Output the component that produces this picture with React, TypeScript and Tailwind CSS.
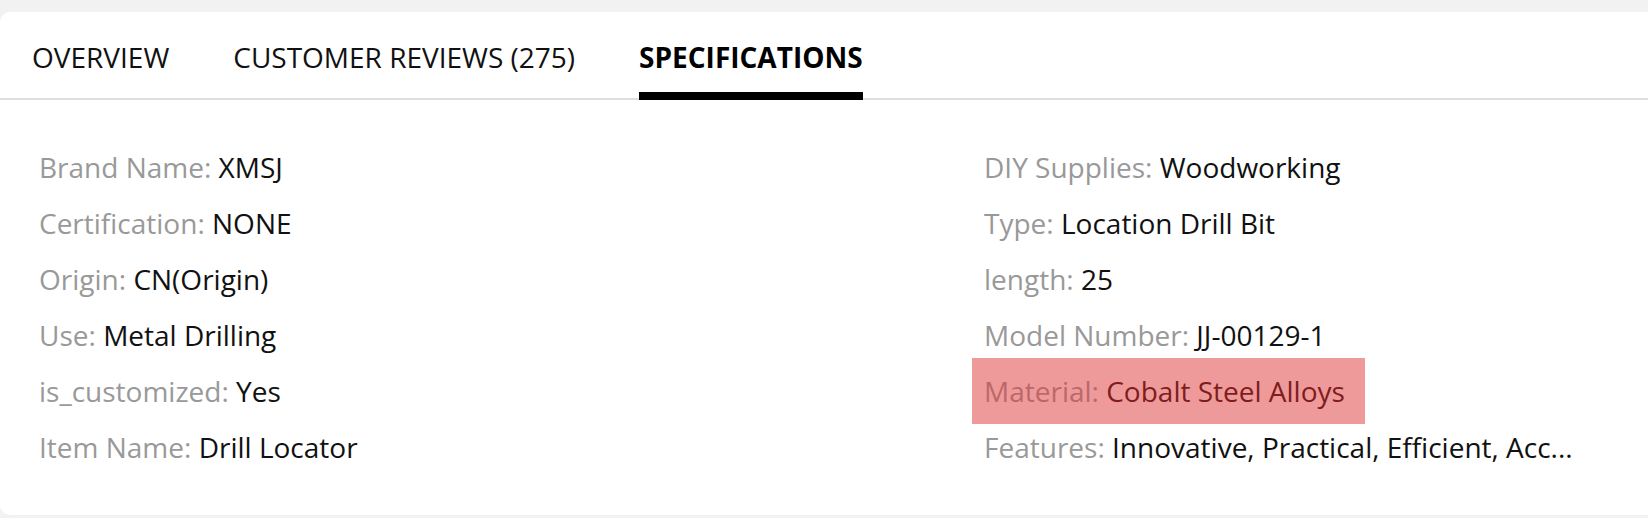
const tabs = [
  { label: "OVERVIEW", active: false },
  { label: "CUSTOMER REVIEWS (275)", active: false },
  { label: "SPECIFICATIONS", active: true },
];

type Spec = { label: string; value: string; highlight?: boolean };

const leftSpecs: Spec[] = [
  { label: "Brand Name", value: "XMSJ" },
  { label: "Certification", value: "NONE" },
  { label: "Origin", value: "CN(Origin)" },
  { label: "Use", value: "Metal Drilling" },
  { label: "is_customized", value: "Yes" },
  { label: "Item Name", value: "Drill Locator" },
];

const rightSpecs: Spec[] = [
  { label: "DIY Supplies", value: "Woodworking" },
  { label: "Type", value: "Location Drill Bit" },
  { label: "length", value: "25" },
  { label: "Model Number", value: "JJ-00129-1" },
  { label: "Material", value: "Cobalt Steel Alloys", highlight: true },
  { label: "Features", value: "Innovative, Practical, Efficient, Acc..." },
];

function SpecRow({ spec }: { spec: Spec }) {
  if (spec.highlight) {
    return (
      <div className="leading-[56px] whitespace-nowrap">
        <span className="-my-[5px] -ml-[12px] inline-block bg-[#ef9a9a] py-[5px] pl-[12px] pr-[20px]">
          <span className="text-[#bb6868]">{spec.label}: </span>
          <span className="text-[#7f1d1d]">{spec.value}</span>
        </span>
      </div>
    );
  }
  return (
    <div className="leading-[56px] whitespace-nowrap">
      <span className="text-[#999999]">{spec.label}: </span>
      <span className="text-[#111111]">{spec.value}</span>
    </div>
  );
}

export default function App() {
  return (
    <div className="h-[518px] overflow-hidden bg-[#f2f2f2] pt-[12px] font-['Open_Sans',sans-serif]">
      <div className="rounded-l-[10px] bg-white pb-[40px]">
        <div className="flex gap-16 border-b-2 border-[#dedede] pl-8">
          {tabs.map((tab) => (
            <div key={tab.label} className="flex flex-col pt-[26px]">
              <span
                className={
                  tab.active
                    ? "text-[28px] font-bold leading-[38px] text-black"
                    : "text-[28px] leading-[38px] text-[#111111]"
                }
              >
                {tab.label}
              </span>
              <span className={tab.active ? "-mb-0.5 mt-4 h-2 bg-black" : "-mb-0.5 mt-4 h-2"} />
            </div>
          ))}
        </div>

        <div className="grid grid-cols-[945px_1fr] pl-[39px] pt-[39px] text-[28px]">
          <div className="flex flex-col">
            {leftSpecs.map((spec) => (
              <SpecRow key={spec.label} spec={spec} />
            ))}
          </div>
          <div className="flex flex-col">
            {rightSpecs.map((spec) => (
              <SpecRow key={spec.label} spec={spec} />
            ))}
          </div>
        </div>
      </div>
    </div>
  );
}
